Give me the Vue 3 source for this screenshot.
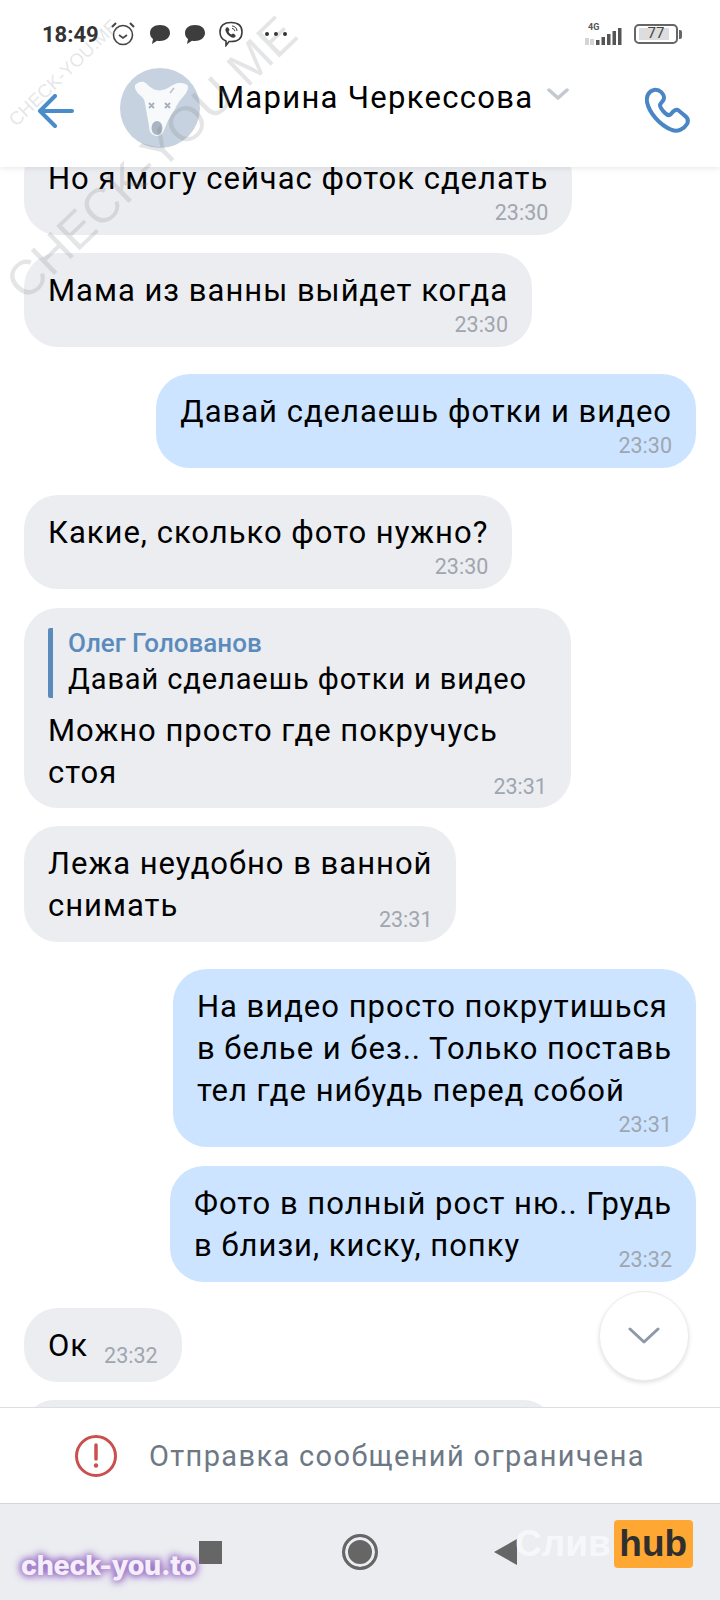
<template>
  <div class="phone">
    <div class="top">
      <div class="status-bar">
        <span class="clock">18:49</span>
        <svg class="st-icon alarm" width="26" height="26" viewBox="0 0 26 26" fill="none" stroke="#444" stroke-width="1.6">
          <circle cx="13" cy="14" r="9.5" />
          <path d="M9 14l4 3 4-3" />
          <path d="M2 6l4-4M24 6l-4-4" stroke-width="2" />
        </svg>
        <svg class="st-icon" width="22" height="22" viewBox="0 0 22 22" fill="#3d3d3d">
          <path d="M11 2c6 0 10 3 10 8s-5 8-10 8c-1 0-2 0-3-.3L3 21l1-5c-2-1.400-3-3.500-3-6 0-5 4-8 10-8z" />
        </svg>
        <svg class="st-icon" width="22" height="22" viewBox="0 0 22 22" fill="#3d3d3d">
          <path d="M11 2c6 0 10 3 10 8s-5 8-10 8c-1 0-2 0-3-.3L3 21l1-5c-2-1.400-3-3.500-3-6 0-5 4-8 10-8z" />
        </svg>
        <svg class="st-icon viber" width="26" height="26" viewBox="0 0 26 26" fill="none" stroke="#3d3d3d" stroke-width="1.6">
          <path d="M13 1.500c7 0 11 3 11 9.500s-4 9.500-11 9.500h-2L8 24.500v-4.500C4 18.500 2 16 2 11c0-6.500 4-9.500 11-9.500z" />
          <path d="M8.500 6.500c1.500-1 2.500 1 3 2.500l-1 1.500c.5 1.500 1.500 2.500 3 3l1.500-1c1.500.5 3 1.500 2.500 3-1 1.500-3 1.500-5 .3-2.500-1.300-4.500-3.800-5-6.300-.2-1.200 0-2.200 1-3z" fill="#3d3d3d" stroke="none" />
          <path d="M14 5c2.500 0 5 2 5 5M14 7.500c1.500 0 2.700 1.200 2.700 2.700" stroke-width="1" />
        </svg>
        <span class="dots"><i></i><i></i><i></i></span>
        <span class="spacer"></span>
        <svg class="signal" width="38" height="26" viewBox="0 0 38 26">
          <text x="3" y="9" class="four-g">4G</text>
          <path d="M1 17v7M3 24v-7M6 18v6M8 18v6" stroke="#aaa" stroke-width="1" />
          <rect x="11" y="19" width="3.500" height="5" fill="#555" />
          <rect x="16.500" y="16" width="3.500" height="8" fill="#555" />
          <rect x="22" y="13" width="3.500" height="11" fill="#555" />
          <rect x="27.500" y="10" width="3.500" height="14" fill="#555" />
          <rect x="33" y="7" width="3.500" height="17" fill="#555" />
        </svg>
        <span class="battery">
          <span class="battery-fill"></span>
          <span class="battery-num">77</span>
        </span>
        <span class="battery-tip"></span>
      </div>

      <header class="chat-head">
        <svg class="back" width="37" height="34" viewBox="0 0 37 34" fill="none" stroke="#4a8bc9" stroke-width="4" stroke-linecap="round" stroke-linejoin="round">
          <path d="M35 17H3M18 2L3 17l15 15" />
        </svg>
        <div class="avatar">
          <svg width="80" height="80" viewBox="0 0 80 80">
            <circle cx="40" cy="40" r="40" fill="#c6d2df" />
            <path d="M15 17C18 14 21 13 24 14C28 16 31 21 36 22C40 23 44 22 48 20C52 17 56 15 60 15C64 15 68 16 68 19C68 23 65 27 62 30C59 33 57 37 55 41C52 46 49 50 47 55C45 60 43 65 41 67C38 69 34 68 32 66C30 64 29 62 29 58C28 52 27 47 26 41C25 36 25 33 23 30C20 27 16 24 15 20Z" fill="#f8f9fb" />
            <path d="M29 35l5 5M34 35l-5 5M45 35l5 5M50 35l-5 5" stroke="#a5b0bd" stroke-width="1.800" />
            <path d="M50 25l4-5" stroke="#b7c0cb" stroke-width="1.500" />
            <ellipse cx="37" cy="60" rx="5.500" ry="7" fill="#a9b5c2" />
          </svg>
        </div>
        <div class="name-row">
          <span class="name">Марина Черкессова</span>
          <svg class="name-chev" width="22" height="14" viewBox="0 0 22 14" fill="none" stroke="#c4c8cf" stroke-width="3.500" stroke-linecap="round" stroke-linejoin="round">
            <path d="M2 2l9 8 9-8" />
          </svg>
        </div>
        <svg class="phone-icon" width="46" height="46" viewBox="0 0 46 46" fill="none" stroke="#4a86c5" stroke-width="4" stroke-linejoin="round">
          <path d="M9 3C4 4 1 9 2 15c2 10 12 23 25 28 6 2 12-1 15-6 2-4 0-7-3-9l-6-5c-2-1-5 1-7 4-2 2-4 1-6-1-3-3-5-6-5-8 1-3 4-4 4-7 0-4-4-9-10-8z" />
        </svg>
      </header>
    </div>

    <main class="messages">
      <div class="bubble in first">
        Но я могу сейчас фоток сделать
        <span class="time">23:30</span>
      </div>
      <div class="bubble in">
        Мама из ванны выйдет когда
        <span class="time">23:30</span>
      </div>
      <div class="bubble out turn">
        Давай сделаешь фотки и видео
        <span class="time">23:30</span>
      </div>
      <div class="bubble in turn">
        Какие, сколько фото нужно?
        <span class="time">23:30</span>
      </div>
      <div class="bubble in tight wide-gap reply">
        <div class="quote">
          <div class="quote-name">Олег Голованов</div>
          <div class="quote-text">Давай сделаешь фотки и видео</div>
        </div>
        Можно просто где покручусь<br>стоя
        <span class="time over">23:31</span>
      </div>
      <div class="bubble in tight">
        Лежа неудобно в ванной<br>снимать
        <span class="time over">23:31</span>
      </div>
      <div class="bubble out turn">
        На видео просто покрутишься<br>в белье и без.. Только поставь<br>тел где нибудь перед собой
        <span class="time">23:31</span>
      </div>
      <div class="bubble out tight wide-gap">
        Фото в полный рост ню.. Грудь<br>в близи, киску, попку
        <span class="time over">23:32</span>
      </div>
      <div class="bubble in turn short">
        <span>Ок</span>
        <span class="time side">23:32</span>
      </div>
      <div class="bubble in cut"></div>

      <button class="scroll-down" type="button">
        <svg width="32" height="20" viewBox="0 0 32 20" fill="none" stroke="#8d99a8" stroke-width="3" stroke-linecap="round" stroke-linejoin="round">
          <path d="M2 3l14 13L30 3" />
        </svg>
      </button>
    </main>

    <div class="restricted">
      <svg width="42" height="42" viewBox="0 0 42 42" fill="none" stroke="#c9504f" stroke-width="3">
        <circle cx="21" cy="21" r="19.500" />
        <path d="M21 10v14" stroke-width="3.500" stroke-linecap="round" />
        <circle cx="21" cy="30.500" r="2.200" fill="#c9504f" stroke="none" />
      </svg>
      <span>Отправка сообщений ограничена</span>
    </div>

    <nav class="nav-bar">
      <span class="nav-square"></span>
      <span class="nav-circle"></span>
      <span class="nav-back"></span>
    </nav>

    <div class="wm wm-small">CHECK-YOU.ME</div>
    <div class="wm wm-big">CHECK-YOU.ME</div>
    <div class="site-mark">check-you.to</div>
    <div class="hub-mark"><span class="hub-word">Слив</span><span class="hub-box">hub</span></div>
  </div>
</template>

<script setup>
</script>

<style scoped>
.phone {
  position: relative;
  display: flex;
  flex-direction: column;
  width: 720px;
  height: 1600px;
  overflow: hidden;
  background: #fff;
  color: #000;
  font-family: Roboto, "Noto Sans", sans-serif;
}

.top {
  position: relative;
  z-index: 2;
  flex: none;
  height: 167px;
  background: #fff;
  box-shadow: 0 1px 6px rgba(0, 0, 0, 0.1);
}

.status-bar {
  display: flex;
  align-items: center;
  height: 26px;
  padding: 21px 38px 0 42px;
}

.clock {
  width: 56px;
  color: #333;
  font-size: 22px;
  font-weight: 700;
  white-space: nowrap;
}

.st-icon {
  flex: none;
  margin-left: 13px;
}

.alarm {
  margin-left: 12px;
}

.viber {
  margin-left: 12px;
}

.dots {
  display: flex;
  gap: 5px;
  margin-left: 21px;
}

.dots i {
  width: 4px;
  height: 4px;
  border-radius: 50%;
  background: #333;
}

.spacer {
  flex: 1;
}

.four-g {
  fill: #555;
  font-family: Roboto, sans-serif;
  font-size: 9px;
  font-weight: 700;
}

.battery {
  position: relative;
  width: 44px;
  height: 20px;
  margin-left: 11px;
  box-sizing: border-box;
  border: 2.500px solid #666;
  border-radius: 5px;
}

.battery-fill {
  position: absolute;
  left: 3px;
  top: 2px;
  bottom: 2px;
  width: 75%;
  background: #ddd;
}

.battery-num {
  position: absolute;
  inset: 0;
  color: #444;
  font-size: 15px;
  line-height: 15px;
  text-align: center;
}

.battery-tip {
  width: 3px;
  height: 9px;
  margin-left: 1px;
  background: #666;
  border-radius: 0 2px 2px 0;
}

.chat-head {
  position: relative;
  display: flex;
  align-items: flex-start;
  height: 120px;
}

.back {
  flex: none;
  margin: 47px 0 0 37px;
}

.avatar {
  flex: none;
  width: 80px;
  height: 80px;
  margin: 21px 0 0 46px;
}

.name-row {
  display: flex;
  align-items: center;
  margin: 32px 0 0 17px;
}

.name {
  font-size: 31px;
  line-height: 38px;
  letter-spacing: 1.3px;
  white-space: nowrap;
}

.name-chev {
  margin: -6px 0 0 13px;
}

.phone-icon {
  position: absolute;
  left: 645px;
  top: 40px;
}

.messages {
  position: relative;
  display: flex;
  flex: 1;
  flex-direction: column;
  align-items: flex-start;
  min-height: 0;
  padding: 0 24px;
  overflow: hidden;
}

.bubble {
  flex: none;
  box-sizing: border-box;
  margin-top: 18px;
  padding: 17px 24px 9px;
  border-radius: 34px;
  background: #ebedf1;
  font-size: 31px;
  line-height: 42px;
  letter-spacing: 1px;
  white-space: nowrap;
}

.bubble.first {
  margin-top: -26px;
}

.bubble.turn {
  margin-top: 27px;
}

.bubble.wide-gap {
  margin-top: 19px;
}

.bubble.out {
  align-self: flex-end;
  background: #cce4ff;
}

.bubble.tight {
  padding-bottom: 15px;
}

.bubble.reply {
  padding-bottom: 14px;
}

.time {
  display: block;
  color: #a0a6af;
  font-size: 21.500px;
  line-height: 26px;
  letter-spacing: 0;
  text-align: right;
}

.time.over {
  margin-top: -20px;
  margin-bottom: -6px;
}

.bubble.short {
  display: flex;
  align-items: flex-end;
  gap: 16px;
  margin-top: 26px;
  padding-bottom: 15px;
}

.time.side {
  margin-bottom: -2px;
}

.bubble.cut {
  width: 530px;
  height: 60px;
}

.quote {
  display: flex;
  flex-direction: column;
  justify-content: space-between;
  height: 70px;
  margin: 3px 20px 12px 0;
  padding-left: 15px;
  border-left: 5px solid #5b8bbd;
  border-radius: 2px;
  line-height: 38px;
}

.quote-name {
  color: #5b8bbd;
  font-size: 26px;
  font-weight: 500;
  line-height: 30px;
  letter-spacing: 0;
}

.quote-text {
  font-size: 29px;
  letter-spacing: 0.9px;
}

.scroll-down {
  position: absolute;
  left: 599px;
  top: 1124px;
  display: flex;
  align-items: center;
  justify-content: center;
  width: 90px;
  height: 90px;
  padding: 0;
  border: 1px solid #ececf0;
  border-radius: 50%;
  background: #fff;
  box-shadow: 0 2px 4px rgba(0, 0, 0, 0.12);
}

.restricted {
  position: relative;
  z-index: 1;
  display: flex;
  flex: none;
  align-items: center;
  box-sizing: border-box;
  height: 97px;
  padding-left: 75px;
  border-top: 1px solid #dcdee3;
  border-bottom: 1px solid #d3d6dc;
  background: #fff;
  color: #6d7885;
  font-size: 29px;
  letter-spacing: 1.35px;
}

.restricted span {
  margin-left: 32px;
  white-space: nowrap;
}

.nav-bar {
  display: flex;
  flex: none;
  align-items: center;
  height: 96px;
  padding: 0 0 0 199px;
  background: #ebedf1;
}

.nav-square {
  width: 23px;
  height: 23px;
  background: #666;
}

.nav-circle {
  box-sizing: border-box;
  width: 36px;
  height: 36px;
  margin-left: 120px;
  border: 3px solid #666;
  border-radius: 50%;
  background: #666;
  box-shadow: inset 0 0 0 3px #ebedf1;
}

.nav-back {
  width: 0;
  height: 0;
  margin-left: 116px;
  border-top: 13px solid transparent;
  border-bottom: 13px solid transparent;
  border-right: 23px solid #666;
}

.wm {
  position: absolute;
  z-index: 3;
  color: rgba(120, 125, 130, 0.2);
  font-family: "Liberation Sans", sans-serif;
  white-space: nowrap;
  transform: rotate(-44deg);
  transform-origin: left center;
  pointer-events: none;
}

.wm-small {
  left: 12px;
  top: 112px;
  font-size: 18.500px;
}

.wm-big {
  left: 14px;
  top: 262px;
  font-size: 49px;
}

.site-mark {
  position: absolute;
  z-index: 3;
  left: 21px;
  top: 1549px;
  color: #f4eefa;
  font-family: Inter, sans-serif;
  font-size: 27px;
  font-weight: 800;
  letter-spacing: -0.3px;
  text-shadow: 0 0 6px #9a6fc4, 0 0 8px #9a6fc4, 0 0 10px #a57fcc;
  white-space: nowrap;
}

.hub-mark {
  position: absolute;
  z-index: 3;
  left: 515px;
  top: 1520px;
  display: flex;
  align-items: center;
  height: 48px;
  font-family: "Liberation Sans", sans-serif;
  font-size: 37px;
  font-weight: 700;
}

.hub-word {
  color: rgba(255, 255, 255, 0.6);
}

.hub-box {
  display: flex;
  align-items: center;
  justify-content: center;
  width: 79px;
  height: 48px;
  margin-left: 3px;
  border-radius: 4px;
  background: #ffa733;
  color: #2f2f2f;
}
</style>
